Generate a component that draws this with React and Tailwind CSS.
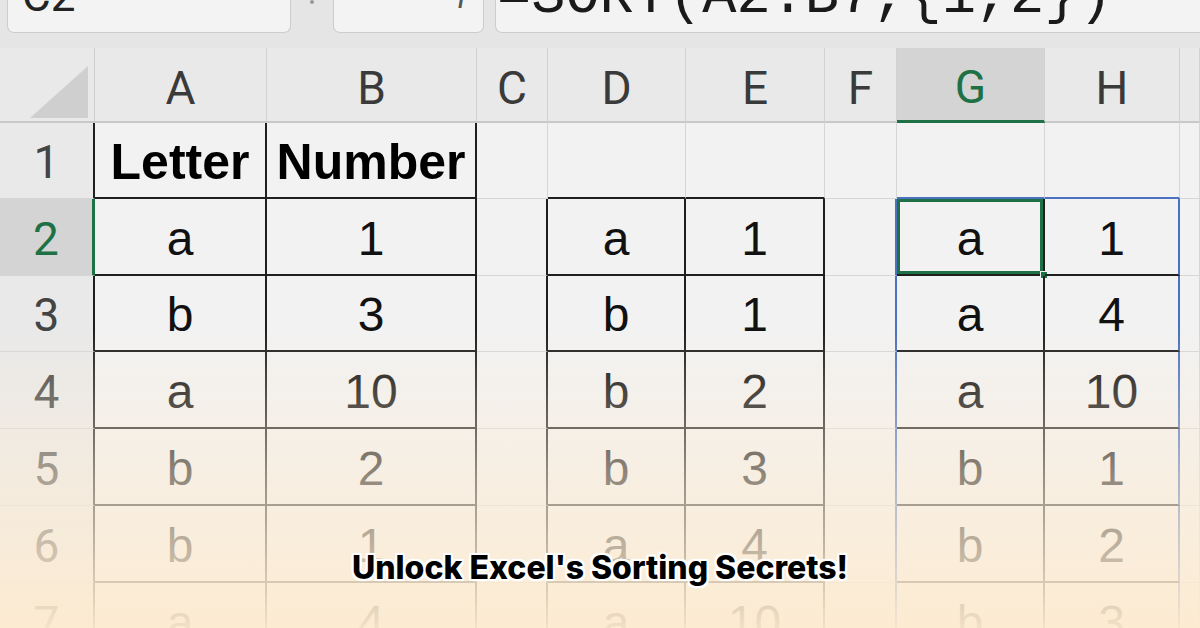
import React from "react";

const headers = ["", "A", "B", "C", "D", "E", "F", "G", "H", ""];

const rows = [
  ["1", "Letter", "Number", "", "", "", "", "", "", ""],
  ["2", "a", "1", "", "a", "1", "", "a", "1", ""],
  ["3", "b", "3", "", "b", "1", "", "a", "4", ""],
  ["4", "a", "10", "", "b", "2", "", "a", "10", ""],
  ["5", "b", "2", "", "b", "3", "", "b", "1", ""],
  ["6", "b", "1", "", "a", "4", "", "b", "2", ""],
  ["7", "a", "4", "", "a", "10", "", "b", "3", ""],
];

const inTable = (r, c) => {
  if ((c === 1 || c === 2) && r >= 1 && r <= 7) return true;
  if ((c === 4 || c === 5) && r >= 2 && r <= 7) return true;
  if ((c === 7 || c === 8) && r >= 2 && r <= 7) return true;
  return false;
};

const RIGHT = {
  gray: "border-r border-r-[#d6d6d6]",
  black: "border-r-2 border-r-[#1f1f1f]",
  blue: "border-r-2 border-r-[#4a72c0]",
  green: "border-r-[3px] border-r-[#1e7145]",
};

const BOTTOM = {
  gray: "border-b border-b-[#d6d6d6]",
  black: "border-b-2 border-b-[#1f1f1f]",
  blue: "border-b-2 border-b-[#4a72c0]",
};

const rightKind = (r, c) => {
  if (c === 0) return r === 2 ? "green" : "black";
  if ((c === 6 || c === 8) && r >= 2) return "blue";
  if (inTable(r, c) || inTable(r, c + 1)) return "black";
  return "gray";
};

const bottomKind = (r, c) => {
  if (c === 0) return "gray";
  if (r === 1 && (c === 7 || c === 8)) return "blue";
  if (inTable(r, c) || inTable(r + 1, c)) return "black";
  return "gray";
};

const Corner = () => (
  <svg width="95" height="75" viewBox="0 0 95 75">
    <polygon points="88,18 88,70 30,70" fill="#cfcfcf" />
  </svg>
);

const Cell = ({ r, c, value }) => {
  const right = RIGHT[rightKind(r, c)];
  const bottom = BOTTOM[bottomKind(r, c)];

  if (c === 0) {
    const selected = r === 2;
    return (
      <div
        className={`flex items-center justify-center pt-[4px] font-['Roboto',sans-serif] text-[46px] ${right} ${bottom} ${
          selected ? "bg-[#d4d4d4] text-[#1e7145]" : "bg-[#e9e9e9] text-[#444444]"
        }`}
      >
        {value}
      </div>
    );
  }

  const active = r === 2 && c === 7;
  return (
    <div
      className={`relative flex items-center justify-center pt-[4px] text-[48px] text-[#111111] font-['Liberation_Sans',Arial,sans-serif] ${right} ${bottom} ${
        r === 1 ? "font-bold text-[50px] text-black" : ""
      } ${active ? "shadow-[inset_0_0_0_3px_#1e7145]" : ""}`}
    >
      {value}
      {active && (
        <span className="absolute -right-[5px] -bottom-[5px] h-[8px] w-[8px] bg-[#1e7145] border border-[#f2f2f2]" />
      )}
    </div>
  );
};

const App = () => {
  return (
    <div className="relative h-[628px] w-[1200px] overflow-hidden bg-[#f2f2f2]">
      {/* formula bar */}
      <div className="flex h-[48px] items-start bg-[#e5e5e5]">
        <div className="ml-[7px] h-[33px] w-[284px] overflow-hidden rounded-b-[7px] border border-t-0 border-[#cdcdcd] bg-[#f3f3f3] pl-[14px]">
          <div className="-mt-[26px] font-['Roboto',sans-serif] text-[44px] leading-none text-[#222222]">
            C2
          </div>
        </div>
        <div className="flex w-[42px] justify-center">
          <span className="h-[4px] w-[4px] rounded-full bg-[#9a9a9a]" />
        </div>
        <div className="h-[33px] w-[151px] overflow-hidden rounded-b-[7px] border border-t-0 border-[#cdcdcd] bg-[#f3f3f3] pl-[20px]">
          <div className="-mt-[30px] flex gap-[22px] font-['Liberation_Serif',serif] text-[36px] italic leading-none text-[#8a8a8a]">
            <span>✕</span>
            <span>✓</span>
            <span className="text-[#555555]">fx</span>
          </div>
        </div>
        <div className="ml-[11px] h-[33px] flex-1 overflow-hidden rounded-bl-[7px] border border-t-0 border-r-0 border-[#cdcdcd] bg-[#f3f3f3] pl-[1px]">
          <div className="-mt-[31px] whitespace-nowrap font-['Liberation_Mono',monospace] text-[57px] leading-none text-[#1a1a1a]">
            =SORT(A2:B7,{"{"}1,2{"}"})
          </div>
        </div>
      </div>

      {/* sheet */}
      <div className="grid grid-cols-[95px_172px_210px_71px_138px_139px_72px_148px_135px_20px] grid-rows-[75px_76px_77px_76px_77px_77px_77px_77px]">
        {headers.map((h, c) => {
          if (c === 0)
            return (
              <div key={c} className="border-r border-b-2 border-r-[#d0d0d0] border-b-[#c8c8c8] bg-[#e9e9e9]">
                <Corner />
              </div>
            );
          const sel = c === 7;
          return (
            <div
              key={c}
              className={`flex items-center justify-center pt-[7px] border-r border-r-[#d2d2d2] font-['Roboto',sans-serif] text-[46px] ${
                sel
                  ? "border-b-[3px] border-b-[#1e7145] bg-[#d4d4d4] text-[#1e7145]"
                  : "border-b-2 border-b-[#c8c8c8] bg-[#e9e9e9] text-[#3a3a3a]"
              }`}
            >
              {h}
            </div>
          );
        })}
        {rows.map((row, i) =>
          row.map((v, c) => <Cell key={`${i}-${c}`} r={i + 1} c={c} value={v} />)
        )}
      </div>

      {/* fade */}
      <div className="pointer-events-none absolute inset-x-0 bottom-0 h-[300px] bg-linear-to-b from-[#fdecd4]/0 via-[#fcecd6]/55 to-[#fdebd0]/95" />

      {/* title */}
      <div className="absolute inset-x-0 top-[548px] text-center font-['Inter',sans-serif] text-[32px] font-extrabold leading-[40px] text-black [text-shadow:0_0_4px_#fff,2px_2px_0_#fff,-2px_-2px_0_#fff,2px_-2px_0_#fff,-2px_2px_0_#fff,0_2px_0_#fff,0_-2px_0_#fff,2px_0_0_#fff,-2px_0_0_#fff]">
        Unlock Excel's Sorting Secrets!
      </div>
    </div>
  );
};

export default App;
